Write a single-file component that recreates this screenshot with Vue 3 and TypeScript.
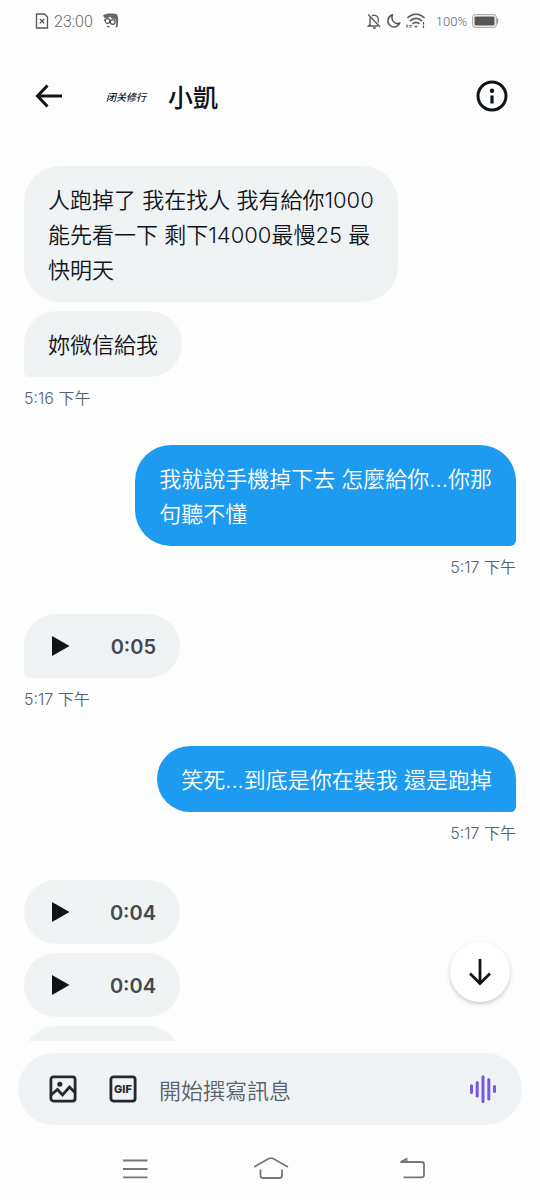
<script setup lang="ts">
import { ref } from 'vue'

interface TextMessage {
  kind: 'text'
  text: string
}
interface VoiceMessage {
  kind: 'voice'
  length?: string
}
interface Group {
  id: number
  mine: boolean
  time?: string
  messages: (TextMessage | VoiceMessage)[]
}

const groups: Group[] = [
  {
    id: 1,
    mine: false,
    time: '5:16 下午',
    messages: [
      { kind: 'text', text: '人跑掉了 我在找人 我有給你1000\n能先看一下 剩下14000最慢25 最\n快明天' },
      { kind: 'text', text: '妳微信給我' },
    ],
  },
  {
    id: 2,
    mine: true,
    time: '5:17 下午',
    messages: [{ kind: 'text', text: '我就說手機掉下去 怎麼給你...你那\n句聽不懂' }],
  },
  { id: 3, mine: false, time: '5:17 下午', messages: [{ kind: 'voice', length: '0:05' }] },
  {
    id: 4,
    mine: true,
    time: '5:17 下午',
    messages: [{ kind: 'text', text: '笑死...到底是你在裝我 還是跑掉' }],
  },
  {
    id: 5,
    mine: false,
    messages: [
      { kind: 'voice', length: '0:04' },
      { kind: 'voice', length: '0:04' },
      { kind: 'voice' },
    ],
  },
]

const draft = ref('')
</script>

<template>
  <div class="screen">
    <div class="status">
      <svg width="14" height="16" viewBox="0 0 14 16" fill="none" stroke="#555" stroke-width="1.3">
        <path d="M1.5 1h8L12.500 4v11h-11z" />
        <path d="M4.800 6l4.400 4.400M9.200 6l-4.400 4.400" />
      </svg>
      <span class="clock">23:00</span>
      <svg class="face" width="16" height="16" viewBox="0 0 16 16">
        <path d="M0 2.500C3 0 11 0 14 1.500c1.500 2 1.500 8 .5 12.500l-2 .5c1-3 1-6 .3-8C10 6 8 5.500 7 3.500 6 5 3.500 5.500 1.500 5z" fill="#666" />
        <g fill="none" stroke="#555" stroke-width="1.200">
          <circle cx="4.500" cy="8" r="2.300" />
          <circle cx="9.800" cy="9" r="2.400" />
          <path d="M1 6.500l1.500 1M4 13.300l2.500.5" />
        </g>
      </svg>
      <span class="spacer"></span>
      <svg width="15" height="16" viewBox="0 0 15 16" fill="none" stroke="#555" stroke-width="1.300">
        <path d="M3 4.500v7L1.500 13H11M5 2.800C6 2 9.500 1.800 10.700 4c.8 1.500.6 4 .6 5.500M1.200 1.500l12 12.500M6 15h2.800" />
      </svg>
      <svg width="14" height="16" viewBox="0 0 14 16" fill="none" stroke="#555" stroke-width="1.500">
        <path d="M5.500 1.800C.5 3.500-.5 9.500 3 12.500c3.300 2.700 8.300 1.500 9.800-2.500C8 12.200 3.500 7.500 5.500 1.800z" stroke-linejoin="round" />
      </svg>
      <svg width="20" height="16" viewBox="0 0 20 16" fill="none" stroke="#555" stroke-width="1.700">
        <path d="M1.500 5c5-5 12-5 17 0M4 8c4-3.500 8-3.500 12 0M6.500 10.800c2.500-2 4.500-2 7 0" />
        <path d="M8.200 12.800h3.600L10 15z" fill="#555" stroke="none" />
        <path d="M1 11.500v3M3.500 12l2 2.500M5.500 12l-2 2.500M17.500 9v2.500M17.500 12.500v2.500" stroke-width="1.200" />
      </svg>
      <span class="percent">100%</span>
      <svg width="27" height="14" viewBox="0 0 27 14">
        <rect x=".7" y=".7" width="23.600" height="12.600" rx="2.500" fill="none" stroke="#999" />
        <rect x="2.500" y="2.500" width="20" height="9" rx="1" fill="#555" />
        <path d="M25.500 4.500v5" stroke="#999" stroke-width="1.300" />
      </svg>
    </div>

    <header class="head">
      <button class="icon-button" type="button" aria-label="返回">
        <svg width="28" height="24" viewBox="0 0 28 24" fill="none" stroke="#0f1419" stroke-width="3">
          <path d="M27 12H3M12.500 1.500L2.500 12l10 10.500" />
        </svg>
      </button>
      <span class="avatar">闭关修行</span>
      <h1 class="name">小凱</h1>
      <button class="icon-button" type="button" aria-label="對話資訊">
        <svg width="32" height="32" viewBox="0 0 32 32">
          <circle cx="16" cy="16" r="14" fill="none" stroke="#0f1419" stroke-width="3" />
          <circle cx="16" cy="10.800" r="2.200" fill="#0f1419" />
          <path d="M16 15.500v8" stroke="#0f1419" stroke-width="3.200" />
        </svg>
      </button>
    </header>

    <main class="conversation">
      <div class="messages">
        <section v-for="group in groups" :key="group.id" class="group" :class="{ mine: group.mine }">
          <template v-for="(message, index) in group.messages" :key="index">
            <p
              v-if="message.kind === 'text'"
              class="bubble"
              :class="{ tail: group.time && index === group.messages.length - 1 }"
            >{{ message.text }}</p>
            <button
              v-else
              type="button"
              class="bubble voice"
              :class="{ tail: group.time && index === group.messages.length - 1 }"
            >
              <svg width="18" height="20" viewBox="0 0 18 20" aria-hidden="true">
                <path d="M0 0l17.500 10L0 20z" fill="#0f1419" />
              </svg>
              <span v-if="message.length" class="length">{{ message.length }}</span>
            </button>
          </template>
          <time v-if="group.time" class="time">{{ group.time }}</time>
        </section>
      </div>
      <button class="jump" type="button" aria-label="最新訊息">
        <svg width="24" height="28" viewBox="0 0 24 28" fill="none" stroke="#0f1419" stroke-width="2.800">
          <path d="M12 1v24M2 15.500l10 10 10-10" />
        </svg>
      </button>
    </main>

    <form class="composer" @submit.prevent>
      <button class="icon-button" type="button" aria-label="圖片">
        <svg width="28" height="28" viewBox="0 0 28 28" fill="none" stroke="#24292e" stroke-width="2.800">
          <rect x="1.900" y="1.900" width="24.200" height="24.200" rx="2.500" />
          <path d="M2 20l6.500-5.500 5 5.500 7-8 6 6" />
          <circle cx="10.800" cy="9.300" r="2.500" fill="#24292e" stroke="none" />
        </svg>
      </button>
      <button class="icon-button" type="button" aria-label="GIF">
        <svg width="28" height="28" viewBox="0 0 28 28">
          <rect x="1.900" y="1.900" width="24.200" height="24.200" rx="2.500" fill="none" stroke="#24292e" stroke-width="2.800" />
          <text class="gif" x="14" y="18" text-anchor="middle">GIF</text>
        </svg>
      </button>
      <input v-model="draft" class="field" type="text" placeholder="開始撰寫訊息" aria-label="開始撰寫訊息" />
      <button class="icon-button" type="button" aria-label="語音訊息">
        <svg width="28" height="28" viewBox="0 0 28 28" stroke="#7856e8" stroke-width="3" stroke-linecap="round">
          <path d="M2.500 10.700v6.800M8.200 7.500v13.500M14 1.800v24.600M19.800 4.500v19.500M25.500 11.500v5" />
        </svg>
      </button>
    </form>

    <nav class="system">
      <button class="icon-button" type="button" aria-label="最近使用">
        <svg width="40" height="24" viewBox="0 0 40 24" fill="none" stroke="#777" stroke-width="1.800">
          <path d="M8 3.500h24.500M8 12h24.500M8 20.300h24.500" />
        </svg>
      </button>
      <button class="icon-button" type="button" aria-label="首頁">
        <svg width="40" height="24" viewBox="0 0 40 24" fill="none" stroke="#777" stroke-width="1.800">
          <path d="M0 10L14.500 1.800q2.500-1.200 5 0L34 10M6.500 12.500v6q0 2.500 2.500 2.500h16.500q2.500 0 2.500-2.500v-6" />
        </svg>
      </button>
      <button class="icon-button" type="button" aria-label="上一頁">
        <svg width="40" height="24" viewBox="0 0 40 24" fill="none" stroke="#777" stroke-width="1.800">
          <path d="M11.500 20.300H29.500q2.500 0 2.500-2.500V7.500Q32 5 29.500 5H8.500L14.500 2v3" />
        </svg>
      </button>
    </nav>
  </div>
</template>

<style>
body {
  margin: 0;
  background: #fdfdfd;
}
</style>

<style scoped>
.screen {
  display: flex;
  flex-direction: column;
  height: 100vh;
  overflow: hidden;
  color: #0f1419;
  font-family: Inter, "Noto Sans CJK TC", sans-serif;
}
button {
  margin: 0;
  padding: 0;
  border: 0;
  background: none;
  color: inherit;
  font: inherit;
  cursor: pointer;
}
svg {
  display: block;
  flex: none;
}
.icon-button {
  flex: none;
}
.status {
  display: flex;
  flex: none;
  align-items: center;
  gap: 5px;
  height: 42px;
  padding: 0 41px 0 35px;
  color: #666;
  font-family: Roboto, sans-serif;
  font-weight: 300;
}
.clock {
  font-size: 16px;
}
.face {
  margin-left: 5px;
}
.spacer {
  flex: 1;
}
.percent {
  margin-left: 5px;
  font-size: 13px;
}
.head {
  display: flex;
  flex: none;
  align-items: center;
  height: 108px;
  padding: 0 32px 0 35px;
}
.avatar {
  width: 54px;
  margin: 0 15px 0 36px;
  font-family: "Noto Sans CJK SC", sans-serif;
  font-size: 10px;
  font-style: italic;
  font-weight: 500;
  text-align: center;
}
.name {
  flex: 1;
  margin: 0;
  font-size: 25px;
  font-weight: 500;
}
.conversation {
  position: relative;
  flex: 1;
  min-height: 0;
}
.messages {
  box-sizing: border-box;
  height: 100%;
  padding: 16px 24px 0;
  overflow: hidden;
}
.group {
  display: flex;
  flex-direction: column;
  align-items: flex-start;
  gap: 9px;
  margin-bottom: 35px;
}
.mine {
  align-items: flex-end;
}
.bubble {
  box-sizing: border-box;
  max-width: 80%;
  margin: 0;
  padding: 17px 24px 14px;
  border-radius: 36px;
  background: #eff3f4;
  font-size: 22px;
  font-weight: 350;
  line-height: 35px;
  white-space: pre-line;
}
.tail {
  border-bottom-left-radius: 6px;
}
.mine .bubble {
  background: #1d9bf0;
  color: #fff;
}
.mine .tail {
  border-bottom-right-radius: 6px;
  border-bottom-left-radius: 36px;
}
.voice {
  display: flex;
  align-items: center;
  justify-content: space-between;
  width: 156px;
  height: 64px;
  padding: 0 24px 0 28px;
  color: #45494e;
  font-size: 20px;
  font-weight: 600;
}
.length {
  padding-top: 2px;
}
.time {
  color: #536471;
  font-size: 16px;
  font-weight: 350;
  line-height: 24px;
}
.jump {
  position: absolute;
  right: 30px;
  bottom: 39px;
  display: grid;
  place-items: center;
  width: 60px;
  height: 60px;
  border-radius: 50%;
  background: #fff;
  box-shadow: 0 2px 4px rgba(0, 0, 0, 0.2);
}
.composer {
  display: flex;
  flex: none;
  align-items: center;
  height: 72px;
  margin: 12px 18px 0;
  padding: 0 25px 0 31px;
  border-radius: 36px;
  background: #eff3f6;
  gap: 32px;
}
.gif {
  fill: #24292e;
  font-family: Inter, sans-serif;
  font-size: 11px;
  font-weight: 800;
}
.field {
  flex: 1;
  height: 40px;
  min-width: 0;
  margin-left: -10px;
  padding: 3px 0 0;
  border: 0;
  outline: 0;
  background: none;
  color: #0f1419;
  font: inherit;
  font-size: 22px;
  font-weight: 350;
}
.field::placeholder {
  color: #5b6268;
  opacity: 1;
}
.system {
  display: flex;
  flex: none;
  align-items: center;
  justify-content: space-between;
  box-sizing: border-box;
  height: 75px;
  padding: 12px 108px 0 115px;
}
</style>
